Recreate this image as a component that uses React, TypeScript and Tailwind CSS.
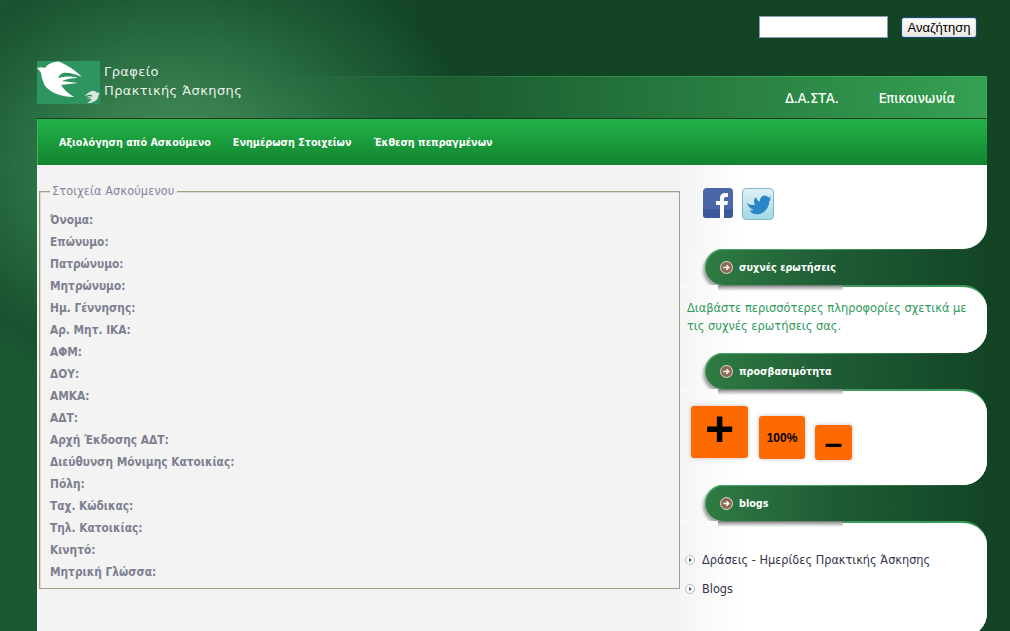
const labels = ["Όνομα:","Επώνυμο:","Πατρώνυμο:","Μητρώνυμο:","Ημ. Γέννησης:","Αρ. Μητ. ΙΚΑ:","ΑΦΜ:","ΔΟΥ:","ΑΜΚΑ:","ΑΔΤ:","Αρχή Έκδοσης ΑΔΤ:","Διεύθυνση Μόνιμης Κατοικίας:","Πόλη:","Ταχ. Κώδικας:","Τηλ. Κατοικίας:","Κινητό:","Μητρική Γλώσσα:"];

function Bird({ className }: { className?: string }) {
  return (
    <svg viewBox="0 0 46 37" className={className} fill="currentColor">
      <path d="M0 7C3 6 6 6 8 7C11 3 15 1 21 .5C29 3 38 9 45 16C38 13 31 11 26 12C22 14 21 16 22 17C28 15 35 15 41 17C35 17 29 18 25 20C30 21 36 21 41 22C35 23 29 23 24 24C27 29 32 33 37 36C27 36 16 33 10 27C6 23 5 17 4 12C3 10 1 8 0 7Z" />
    </svg>
  );
}

const condensed = "[font-family:'DejaVu_Sans_Condensed','DejaVu_Sans',sans-serif] [font-stretch:condensed]";

function Pill({ title }: { title: string }) {
  return (
    <div className="relative isolate flex h-[36px] bg-gradient-to-r from-[#f5f5f5] to-white to-[60px] pl-[25px]">
      <span className="absolute top-0 left-[25px] -z-10 h-[36px] w-[60px] rounded-l-[18px] shadow-[-2px_3px_3px_rgba(0,0,0,0.35)]" />
      <div className="relative flex flex-1 items-center rounded-l-[18px] bg-gradient-to-r from-[#2f7c43] via-[#1e5c35] via-[45%] to-[#134525] pl-[15px] shadow-[inset_1px_1px_0_#4aa566]">
        <span className="flex h-[13px] w-[13px] items-center justify-center rounded-full border border-[#e8dcd0] bg-[#8c6a55]">
          <svg viewBox="0 0 10 10" className="h-[9px] w-[9px]"><path d="M1.500 5h6M5 2.500 7.500 5 5 7.500" stroke="#fff" strokeWidth="1.600" fill="none" /></svg>
        </span>
        <span className={"ml-[6px] pt-[2px] text-[10.700px] font-bold text-white " + condensed}>{title}</span>
        <span className="absolute top-0 right-0 h-px w-[170px] bg-gradient-to-r from-[#134525]/0 to-[#134525]" />
      </div>
    </div>
  );
}

function Bullet() {
  return (
    <span className="flex h-[10px] w-[10px] items-center justify-center rounded-full border border-[#b5b8bc] bg-white">
      <span className="h-0 w-0 border-y-[2px] border-l-[3px] border-y-transparent border-l-[#4a5a70]" />
    </span>
  );
}

function Panel({ className, children }: { className: string; children: React.ReactNode }) {
  return (
    <div className={"relative rounded-tr-[24px] rounded-br-[24px] border-t-2 border-[#3f9a5a] bg-white bg-gradient-to-r from-[#f5f5f5] to-white to-[60px] " + className}>
      <span className="absolute top-[-2px] left-0 h-[2px] w-[40px] bg-[#f9f9f9]" />
      <span className="absolute top-[-2px] left-[38px] h-[6px] w-[125px] bg-gradient-to-b from-[#6a756d] via-[#b5b5b5] via-40% to-white/0" />
      {children}
    </div>
  );
}

export default function App() {
  return (
    <div className="h-[631px] w-[1010px] overflow-hidden bg-[#134525] bg-[radial-gradient(ellipse_300px_235px_at_175px_165px,#4b9560_0%,#3b8150_25%,#2a6f43_50%,#1e5c35_72%,#18522f_86%,rgba(19,69,37,0)_100%),linear-gradient(90deg,#1a5a33_0%,#134525_42%)] [font-family:'DejaVu_Sans',sans-serif]">
      <div className="flex h-[61px] items-start justify-end pt-[16px] pr-[33px]">
        <input className="h-[22px] w-[129px] border border-[#7f9db9] bg-white" />
        <button className="mt-[1px] ml-[13px] h-[21px] w-[76px] rounded-[3px] border border-[#1f4a7a] bg-gradient-to-b from-white to-[#ece9e0] text-center text-[13px] text-black shadow-[inset_0_0_0_1px_#d5e2f3] [font-family:'Liberation_Sans',sans-serif]">Αναζήτηση</button>
      </div>

      <div className="ml-[37px] w-[950px]">
        <div className="relative h-[58px]">
          <div className={"absolute inset-x-0 top-[15px] flex h-[43px] items-center justify-end border-r border-b border-r-[#36b058] border-b-[#123a22] bg-gradient-to-r from-[#2a7a44]/0 from-[25%] to-[#35a052] pt-[3px] pr-[31px] text-[14px] text-[#f2f8f2] [text-shadow:0_0_0.6px_#fff] " + condensed}>
            <span className="absolute inset-x-0 top-0 h-px bg-gradient-to-r from-[#36b058]/0 from-[25%] to-[#36b058]" />
            <span className="mr-[40px]">Δ.Α.ΣΤΑ.</span>
            <span>Επικοινωνία</span>
          </div>
          <div className="relative flex h-[43px] items-start text-[#e9f2ea]">
            <div className="relative h-[43px] w-[63px] bg-[#2f9560] text-white">
              <Bird className="h-[37px] w-[46px]" />
              <Bird className="absolute top-[29px] left-[47px] h-[14px] w-[16px] -scale-x-100 text-[#dce8dd]" />
            </div>
            <div className="ml-[4px] pt-[1px] text-[13px] leading-[19px] tracking-[0.4px]">
              <div>Γραφείο</div>
              <div>Πρακτικής Άσκησης</div>
            </div>
          </div>
        </div>

        <div className={"flex h-[46px] items-center gap-[22px] border-l border-[#37b75b] bg-gradient-to-b from-[#22b348] to-[#128430] pt-[3px] pl-[21px] text-[10.700px] font-bold text-white " + condensed}>
          <span>Αξιολόγηση από Ασκούμενο</span>
          <span>Ενημέρωση Στοιχείων</span>
          <span>Έκθεση πεπραγμένων</span>
        </div>

        <div className="flex h-[500px] items-start">
          <div className="h-full w-[643px] bg-[#f3f3f3] pt-[19px] pl-[2px]">
            <fieldset className="h-[405px] w-[641px] border border-[#a39d87] pl-[10px] shadow-[inset_1px_1px_0_#dcdad0]">
              <legend className={"bg-[#f3f3f3] px-[2px] text-[12.500px] leading-[14px] tracking-[0.15px] text-[#85859a] " + condensed}>Στοιχεία Ασκούμενου</legend>
              <div className="pt-[11px]">
                {labels.map((l) => (
                  <div key={l} className={"h-[22px] text-[11.800px] leading-[22px] font-bold text-[#7d8090] " + condensed}>{l}</div>
                ))}
              </div>
            </fieldset>
          </div>

          <div className="w-[307px]">
            <div className="flex h-[84px] items-start gap-[9px] rounded-br-[24px] bg-gradient-to-r from-[#f3f3f3] to-white to-[60px] pt-[23px] pl-[23px]">
              <svg viewBox="0 0 30 30" className="h-[30px] w-[30px]">
                <rect width="30" height="30" rx="4" fill="#4a68a8" />
                <rect y="21" width="30" height="9" rx="3" fill="#3b5998" />
                <path d="M17 30V17h-4v-4h4v-3c0-3 2-5 5-5h3v4h-2c-1.500 0-2 .7-2 2v2h4l-.6 4H21v13z" fill="#fff" />
              </svg>
              <div className="h-[32px] w-[32px] rounded-[4px] border border-[#7fb9d0] bg-gradient-to-b from-[#dff0f6] to-[#a5d8e4]">
                <svg viewBox="0 0 32 32" className="h-[30px] w-[30px]" fill="#2a86c8"><path d="M4 15C7 17 10 17.500 13 17C11 14 11.500 10 14 9C15 12 16.500 13 18 13.500C18 10 20 7 23 7C25 7 26 8 27 9L30 8L28 11L30 11L28 13C28 20 22 27 15 27C11 27 8 25 7 22C9 23 10 23 11 22.500C8 21 5 18 4 15Z" /></svg>
              </div>
            </div>

            <Pill title="συχνές ερωτήσεις" />
            <Panel className={"h-[68px] pt-[12px] pr-[12px] pl-[7px] text-[12.700px] leading-[18px] text-[#2e9a5a] " + condensed}>
              Διαβάστε περισσότερες πληροφορίες σχετικά με τις συχνές ερωτήσεις σας.
            </Panel>

            <Pill title="προσβασιμότητα" />
            <Panel className="flex h-[96px] items-end pb-[25px] pl-[11px] [font-family:'Liberation_Sans',sans-serif] font-bold text-black">
              <div className="mb-[2px] flex h-[52px] w-[57px] items-start justify-center rounded-[3px] bg-[#ff6a00] text-[50px] leading-[46px] shadow-[0_0_4px_rgba(0,0,0,0.25)]">+</div>
              <div className="mb-[1px] ml-[11px] flex h-[43px] w-[46px] items-center justify-center rounded-[3px] bg-[#ff6a00] text-[12px] shadow-[0_0_4px_rgba(0,0,0,0.25)]">100%</div>
              <div className="ml-[10px] flex h-[35px] w-[37px] items-start justify-center rounded-[3px] bg-[#ff6a00] text-[32px] leading-[36px] shadow-[0_0_4px_rgba(0,0,0,0.25)]">–</div>
            </Panel>

            <Pill title="blogs" />
            <Panel className={"h-[116px] pt-[27px] pl-[5px] text-[12.600px] text-[#33334a] " + condensed}>
              <div className="flex h-[20px] items-center gap-[7px]"><Bullet /><span>Δράσεις - Ημερίδες Πρακτικής Άσκησης</span></div>
              <div className="mt-[9px] flex h-[20px] items-center gap-[7px]"><Bullet /><span>Blogs</span></div>
            </Panel>
          </div>
        </div>
      </div>
    </div>
  );
}
